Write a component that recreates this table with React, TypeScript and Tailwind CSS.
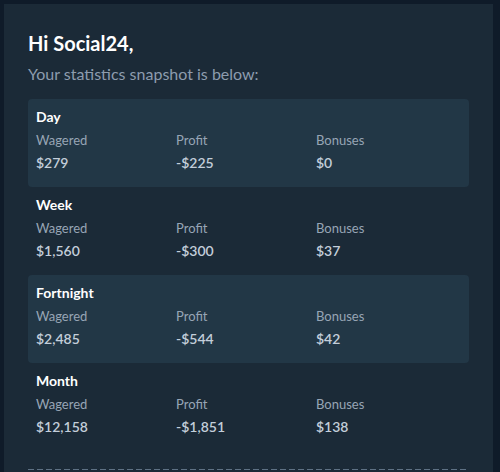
const periods = [
  { name: "Day", wagered: "$279", profit: "-$225", bonuses: "$0", shaded: true },
  { name: "Week", wagered: "$1,560", profit: "-$300", bonuses: "$37", shaded: false },
  { name: "Fortnight", wagered: "$2,485", profit: "-$544", bonuses: "$42", shaded: true },
  { name: "Month", wagered: "$12,158", profit: "-$1,851", bonuses: "$138", shaded: false }
];

function StatRow({ period }: { period: (typeof periods)[number] }) {
  return (
    <div
      className={`h-[88px] rounded px-2 pt-2 ${
        period.shaded ? "bg-[#223746]" : ""
      }`}
    >
      <h3 className="text-[14px] font-bold leading-5 text-white">{period.name}</h3>
      <div className="mt-[3px] grid grid-cols-[140px_140px_1fr]">
        {[
          ["Wagered", period.wagered],
          ["Profit", period.profit],
          ["Bonuses", period.bonuses]
        ].map(([label, value]) => (
          <div key={label}>
            <div className="text-[13px] leading-5 text-[#97a5b5]">{label}</div>
            <div className="mt-[3px] text-[14px] font-semibold leading-5 text-[#c3ceda]">
              {value}
            </div>
          </div>
        ))}
      </div>
    </div>
  );
}

export default function App() {
  return (
    <div className="h-[472px] overflow-hidden bg-[#0f1b29] pl-1 pr-[7px] pt-1 font-['Lato',sans-serif]">
      <div className="h-full bg-[#1b2a37] px-6 pt-[25px]">
        <h1 className="text-[20px] font-bold leading-7 text-white">Hi Social24,</h1>
        <p className="mt-[5px] text-[16px] leading-6 text-[#8d9cae]">
          Your statistics snapshot is below:
        </p>
        <div className="mt-[13px]">
          {periods.map((p) => (
            <StatRow key={p.name} period={p} />
          ))}
        </div>
        <div className="mt-[18px] h-px bg-[repeating-linear-gradient(90deg,#5e7184_0_6px,transparent_6px_9px)]" />
      </div>
    </div>
  );
}
